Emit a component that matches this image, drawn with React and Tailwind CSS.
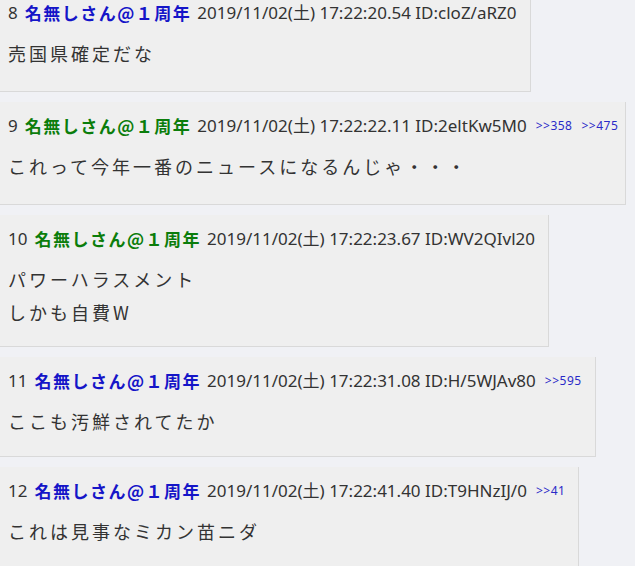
import React from "react";

const posts = [
  { n: 8, color: "text-[#1515c8]", date: "2019/11/02(土) 17:22:20.54", id: "cloZ/aRZ0", anchors: [], body: ["売国県確定だな"], w: "w-[531px] h-[103px]" },
  { n: 9, color: "text-[#0b7d0b]", date: "2019/11/02(土) 17:22:22.11", id: "2eltKw5M0", anchors: ["358", "475"], body: ["これって今年一番のニュースになるんじゃ・・・"], w: "w-[626px] h-[103px]" },
  { n: 10, color: "text-[#0b7d0b]", date: "2019/11/02(土) 17:22:23.67", id: "WV2QIvl20", anchors: [], body: ["パワーハラスメント", "しかも自費W"], w: "w-[549px] h-[132px]" },
  { n: 11, color: "text-[#1515c8]", date: "2019/11/02(土) 17:22:31.08", id: "H/5WJAv80", anchors: ["595"], body: ["ここも汚鮮されてたか"], w: "w-[596px] h-[100px]" },
  { n: 12, color: "text-[#1515c8]", date: "2019/11/02(土) 17:22:41.40", id: "T9HNzIJ/0", anchors: ["41"], body: ["これは見事なミカン苗ニダ"], w: "w-[579px] h-[103px]" },
];

export default function App() {
  return (
    <div
      className="h-[566px] overflow-hidden bg-[#f0f1f5]"
      style={{ fontFamily: '"Noto Sans", "Noto Sans CJK JP", sans-serif' }}
    >
      <div className="-mt-[11px] flex flex-col gap-[10px]">
        {posts.map((p) => (
          <div
            key={p.n}
            className={`${p.w} shrink-0 bg-[#efefef] border-r border-b border-[#d9d9d9] pl-2 pt-3`}
          >
            <div className="h-6 flex items-center whitespace-nowrap text-[17px] text-[#333333] leading-6">
              <span>{p.n}</span>
              <span
                className={`ml-[7px] font-bold tracking-[1.5px] ${p.color}`}
                style={{ fontFamily: '"Noto Sans CJK JP", sans-serif' }}
              >
                名無しさん@１周年
              </span>
              <span className="ml-[6px]">
                {p.date} ID:{p.id}
              </span>
              {p.anchors.map((a) => (
                <span key={a} className="ml-[9px] text-[12px] text-[#2a2ac8] tracking-[0.5px]">
                  &gt;&gt;{a}
                </span>
              ))}
            </div>
            <div
              className="mt-3 text-[18px] leading-[33px] tracking-[3px] text-[#333333] whitespace-nowrap"
              style={{ fontFamily: '"Noto Sans CJK JP", sans-serif' }}
            >
              {p.body.map((l, i) => (
                <div key={i}>{l}</div>
              ))}
            </div>
          </div>
        ))}
      </div>
    </div>
  );
}
